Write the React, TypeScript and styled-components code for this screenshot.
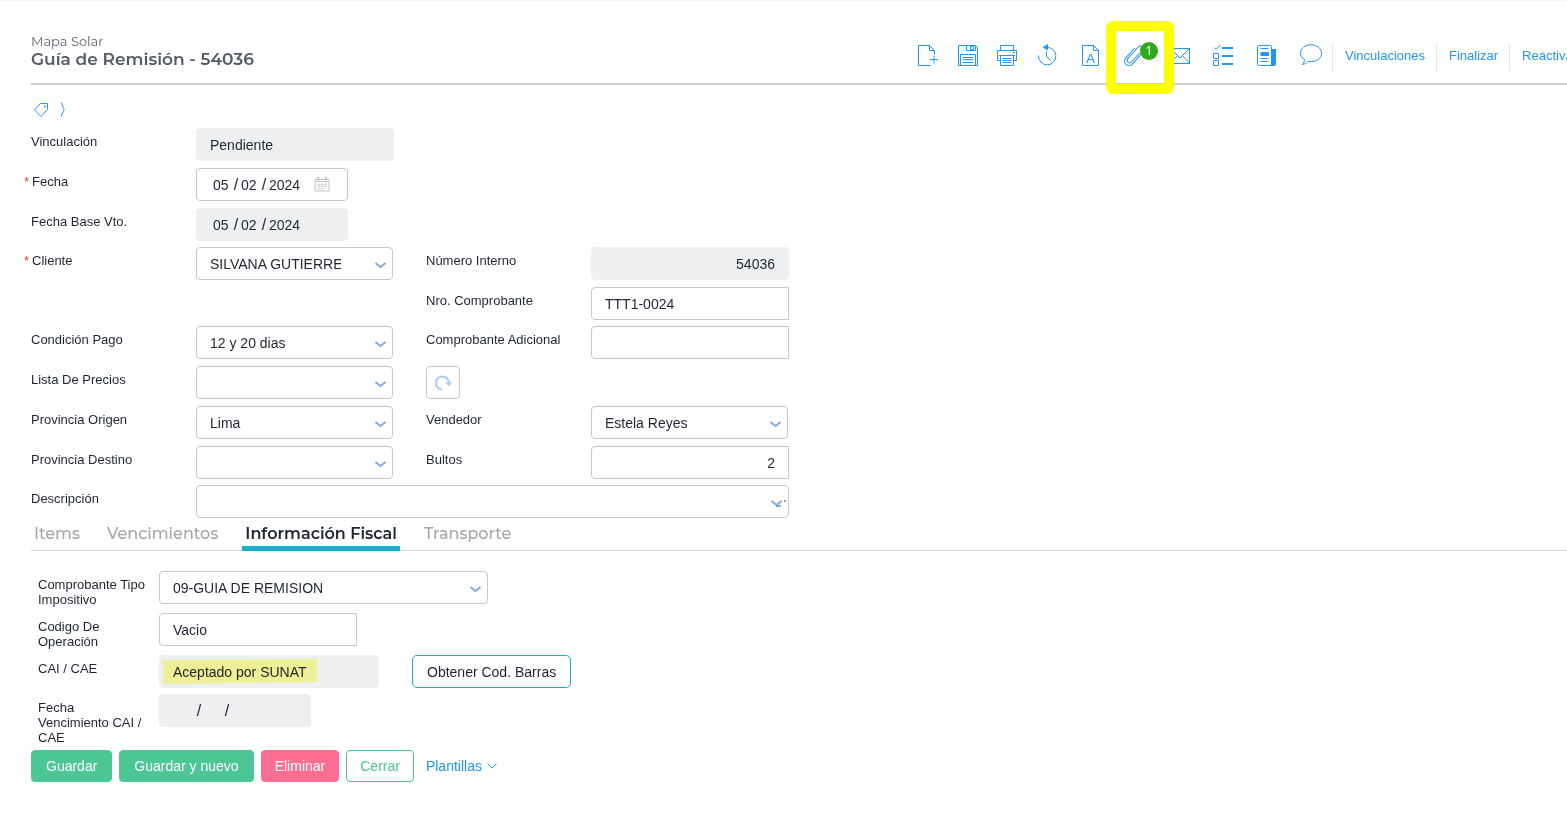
import React from "react";
import styled, { createGlobalStyle, css } from "styled-components";

const GlobalStyle = createGlobalStyle`
  * { box-sizing: border-box; }
  body {
    margin: 0;
    background: #fff;
    color: #1f2533;
    font-family: "Liberation Sans", Arial, sans-serif;
    font-size: 14px;
  }
  button, input, select { font: inherit; color: inherit; }
`;

const blue = "#2196f3";
const heading = `Montserrat, Inter, sans-serif`;

const Page = styled.main`
  padding: 0 0 40px 31px;
  overflow-x: clip;
  border-top: 1px solid #f7f7f7;
`;

const Header = styled.header`
  display: flex;
  align-items: flex-start;
  padding-top: 33px;
  height: 84px;
  border-bottom: 2px solid #cccdd2;
`;

const Titles = styled.div`
  flex: 1;
  min-width: 0;
  font-family: ${heading};
`;

const Company = styled.p`
  margin: 0;
  font-size: 13px;
  line-height: 15px;
  color: #5f646e;
`;

const Title = styled.h1`
  margin: 0;
  font-size: 17px;
  line-height: 20px;
  font-weight: 600;
  color: #555a64;
`;

const Toolbar = styled.nav`
  display: flex;
  flex: 0 0 659px;
  width: 659px;
  margin-top: 10px;
  white-space: nowrap;
`;

const IconButton = styled.button<{ $wide?: boolean }>`
  position: relative;
  display: flex;
  flex: none;
  justify-content: center;
  width: ${(p) => (p.$wide ? 44 : 40)}px;
  height: 27px;
  padding: 0;
  border: 0;
  background: none;
  cursor: pointer;
`;

const ToolIcon = styled.svg`
  width: 24px;
  height: 24px;
  overflow: visible;
  fill: none;
  stroke: ${blue};
  stroke-width: 1;
`;

const ToolLink = styled.a`
  flex: none;
  height: 27px;
  padding: 0 11px 0 12px;
  border-left: 1px solid #e2e3e5;
  font-size: 13px;
  line-height: 23px;
  color: ${blue};
  text-decoration: none;
`;

const Badge = styled.span`
  position: absolute;
  top: -2px;
  left: 28px;
  width: 18px;
  height: 18px;
  border-radius: 50%;
  background: #2fa81c;
  color: #fff;
  font: 12px/18px "Noto Sans", sans-serif;
  text-align: center;
`;

const Highlight = styled.span`
  position: absolute;
  z-index: 1;
  top: -23px;
  left: -6px;
  width: 68px;
  height: 73px;
  border: 10px solid #ffff00;
  border-radius: 7px;
  pointer-events: none;
`;

const Crumbs = styled.div`
  display: flex;
  align-items: center;
  gap: 10px;
  height: 43px;
  padding: 7px 0 0 2px;
`;

const CrumbButton = styled.button`
  display: flex;
  padding: 0;
  border: 0;
  background: none;
`;

const LineIcon = styled.svg`
  fill: none;
  stroke: ${blue};
`;

const Form = styled.form`
  margin: 0;
`;

const FieldGroup = styled.div<{ $last?: boolean }>`
  display: grid;
  grid-template-columns: 165px 198px 32px 165px 198px;
  row-gap: 7px;
  margin-bottom: ${(p) => (p.$last ? 0 : 6)}px;
`;

const Label = styled.label<{ $second?: boolean; $narrow?: boolean }>`
  grid-column: ${(p) => (p.$second ? 4 : 1)};
  padding: 6px ${(p) => (p.$narrow ? 12 : 0)}px 0 0;
  font-size: 13px;
  line-height: 15px;
`;

const Star = styled.span`
  display: inline-block;
  width: 8px;
  margin-left: -7px;
  color: #e8412c;
`;

const Cell = styled.div<{ $second?: boolean; $span?: boolean }>`
  position: relative;
  display: flex;
  grid-column: ${(p) => (p.$second ? "5" : p.$span ? "2 / 6" : "2")};
`;

const box = css`
  height: 33px;
  border: 1px solid #c6c8cb;
  border-radius: 4px;
  background: #fff;
  outline: 0;
`;

const Input = styled.input<{ $width?: number; $right?: boolean }>`
  ${box}
  width: ${(p) => p.$width ?? 198}px;
  padding: 0 13px;
  border-radius: 4px 0 0 4px;
  text-align: ${(p) => (p.$right ? "right" : "left")};

  &:read-only {
    border-color: #eeeff1;
    border-radius: 4px;
    background: #eeeff1;
  }
`;

const SelectBox = styled.div<{ $width?: number }>`
  position: relative;
  width: ${(p) => p.$width ?? 197}px;
`;

const SelectControl = styled.select`
  ${box}
  display: block;
  width: 100%;
  padding: 0 51px 0 13px;
  appearance: none;
`;

const SelectArrow = styled.svg`
  position: absolute;
  top: 14px;
  right: 6px;
  width: 13px;
  height: 9px;
  overflow: visible;
  pointer-events: none;
  fill: none;
  stroke: #7fabdc;
  stroke-width: 2;
`;

const DateBox = styled.div<{ $disabled?: boolean }>`
  ${box}
  display: flex;
  align-items: center;
  width: 152px;
  padding-left: 16px;
  ${(p) => p.$disabled && "background: #eeeff1; border-color: #eeeff1;"}
`;

const DatePart = styled.input<{ $year?: boolean }>`
  width: ${(p) => (p.$year ? 34 : 18)}px;
  height: 20px;
  padding: 0;
  border: 0;
  background: transparent;
  outline: 0;
`;

const Slash = styled.span`
  width: 10px;
  text-align: center;
  font-size: 16px;
`;

const CalendarButton = styled.button`
  display: flex;
  margin-left: 11px;
  padding: 0;
  border: 0;
  background: none;
`;

const Reload = styled.button`
  ${box}
  display: flex;
  grid-column: 4;
  align-items: center;
  justify-content: center;
  width: 34px;
  padding: 0;
`;

const Tabs = styled.div`
  display: flex;
  gap: 21px;
  height: 33px;
  border-bottom: 1px solid #d8d9db;
`;

const Tab = styled.button<{ $active?: boolean }>`
  height: 33px;
  padding: 4px 3px 0;
  border: 0;
  border-bottom: 5px solid ${(p) => (p.$active ? "#1cabd0" : "transparent")};
  background: none;
  color: ${(p) => (p.$active ? "#1f2533" : "#a6a6a6")};
  font-family: ${heading};
  font-size: 16px;
  font-weight: ${(p) => (p.$active ? 600 : 500)};
  line-height: 24px;
`;

const Fiscal = styled.div`
  display: grid;
  grid-template-columns: 121px auto;
  row-gap: 6px;
  padding: 20px 0 5px 7px;
`;

const FiscalCell = styled.div`
  position: relative;
  display: flex;
  gap: 33px;
`;

const Marker = styled.span`
  position: absolute;
  top: 4px;
  left: 4px;
  width: 154px;
  height: 25px;
  background: #ffff9f;
  mix-blend-mode: multiply;
  clip-path: polygon(0 5%, 100% 0, 100% 93%, 0 100%);
  pointer-events: none;
`;

const Button = styled.button<{ $kind: "green" | "pink" | "line" | "outline" }>`
  height: ${(p) => (p.$kind === "outline" ? 33 : 32)}px;
  padding: 0 ${(p) => (p.$kind === "green" || p.$kind === "outline" ? 14 : 13)}px;
  border: 1px solid;
  border-radius: 4px;
  ${(p) =>
    ({
      green: "background: #4dc695; border-color: #4dc695; color: #fff;",
      pink: "background: #ff6e92; border-color: #ff6e92; color: #fff;",
      line: "background: #fff; border-color: #4dc695; color: #4dc695;",
      outline: "background: #fff; border-color: #1cabd0; border-radius: 5px;",
    })[p.$kind]}
`;

const Actions = styled.footer`
  display: flex;
  gap: 7px;
`;

const MenuButton = styled.button`
  display: flex;
  align-items: center;
  gap: 4px;
  height: 32px;
  padding: 0 5px;
  border: 0;
  background: none;
  color: ${blue};
`;

function Select(props: { id: string; value?: string; width?: number; busy?: boolean }) {
  return (
    <SelectBox $width={props.width}>
      <SelectControl id={props.id}>
        <option>{props.value ?? ""}</option>
      </SelectControl>
      <SelectArrow viewBox="0 0 13 9">
        <path d="M1.500 2L6.500 6L11.500 2" />
        {props.busy && <path d="M6 7h5M15 1v2" />}
      </SelectArrow>
    </SelectBox>
  );
}

function DateField(props: { id: string; name: string; value?: string[]; disabled?: boolean; calendar?: boolean }) {
  const [d, m, y] = props.value ?? ["", "", ""];
  return (
    <DateBox $disabled={props.disabled}>
      <DatePart id={props.id} defaultValue={d} readOnly={props.disabled} />
      <Slash>/</Slash>
      <DatePart aria-label={`${props.name}: mes`} defaultValue={m} readOnly={props.disabled} />
      <Slash>/</Slash>
      <DatePart $year aria-label={`${props.name}: año`} defaultValue={y} readOnly={props.disabled} />
      {props.calendar && (
        <CalendarButton type="button" aria-label="Abrir calendario">
          <svg width="16" height="15" viewBox="0 0 16 15" fill="none" stroke="#c4c4c4">
            <path d="M1 2.500h14v11.500H1zM1 4.500h14" />
            <path d="M4 0v3M12 0v3" strokeWidth="2" />
            <path d="M3 7.500h10M3 9.500h10M3 11.500h6M5.500 6v7M8.500 6v7M11.500 5v6" stroke="#d9d9d9" />
          </svg>
        </CalendarButton>
      )}
    </DateBox>
  );
}

export default function App() {
  return (
    <>
      <GlobalStyle />
      <Page>
        <Header>
          <Titles>
            <Company>Mapa Solar</Company>
            <Title>Guía de Remisión - 54036</Title>
          </Titles>
          <Toolbar aria-label="Herramientas">
            <IconButton aria-label="Nuevo">
              <ToolIcon viewBox="0 0 24 24">
                <path d="M14.500 21.500h-12v-20h11l5 5v4M13.500 1.500v5h5M18 11.500v8M14 15.500h8" />
              </ToolIcon>
            </IconButton>
            <IconButton aria-label="Guardar">
              <ToolIcon viewBox="0 0 24 24">
                <path d="M2.500 1.500h17l2 2v18h-19zM10.500 1.500v5h9v-5M14.500 2.500h3v3h-3zM4.500 21.500v-11h15v11" />
                <path d="M6.500 13.500h11M6.500 15.500h11M6.500 18.500h11" />
              </ToolIcon>
            </IconButton>
            <IconButton aria-label="Imprimir">
              <ToolIcon viewBox="0 0 24 24">
                <path d="M4.500 6.500v-5h13v5M4.500 16.500h-3v-10h19v10h-3M4.500 11.500h13v10h-13zM3 11.500h16" />
                <path d="M6.500 14.500h9M6.500 16.500h9M6.500 18.500h9M17 8.500h2" />
              </ToolIcon>
            </IconButton>
            <IconButton aria-label="Historial">
              <ToolIcon viewBox="0 0 24 24">
                <path d="M10 3.500A8.700 8.700 0 1 1 2.500 11.500M10.500 7.500v5l4 4" />
                <path d="M6.500 3.200L12 0v6.500z" fill={blue} stroke="none" />
              </ToolIcon>
            </IconButton>
            <IconButton $wide aria-label="Plantilla de texto">
              <ToolIcon viewBox="0 0 24 24">
                <path d="M4.500 1.500h11l5 5v15h-16zM15.500 1.500v5h5" />
                <text x="12.500" y="19" textAnchor="middle" fontSize="13" fill={blue} stroke="none">
                  A
                </text>
              </ToolIcon>
            </IconButton>
            <IconButton $wide aria-label="Adjuntos">
              <ToolIcon viewBox="0 0 24 24">
                <path
                  transform="rotate(42 12 11.500)"
                  d="M7.500 6v13a4.500 4.500 0 0 0 9 0V3a3.500 3.500 0 0 0-7 0v15a2.500 2.500 0 0 0 5 0V6"
                />
              </ToolIcon>
              <Badge>1</Badge>
              <Highlight />
            </IconButton>
            <IconButton $wide aria-label="Correo">
              <ToolIcon viewBox="0 0 24 24">
                <path d="M4.500 4.500h19v15h-19zM4.500 4.500l9.500 9.500l9.500-9.500M4.500 19.500l7-8M23.500 19.500l-7-8" />
              </ToolIcon>
            </IconButton>
            <IconButton $wide aria-label="Tareas">
              <ToolIcon viewBox="0 0 24 24">
                <path d="M4 3.500l2 2l4.500-4.500M3.500 9.500h5v5h-5zM3.500 16.500h5v5h-5z" />
                <path d="M12 4h11M12 12h11M12 20h11" strokeWidth="2" />
              </ToolIcon>
            </IconButton>
            <IconButton $wide aria-label="Noticias">
              <ToolIcon viewBox="0 0 24 24">
                <path d="M5 1.500h11.500q1 0 1 1v19h-12q-2 0-2-2v-17q0-1 1.500-1zM6.500 4.500h8M6.500 14.500h8M6.500 17.500h8" />
                <path d="M6.500 8h8.500v4h-8.500zM18 5h4v15q0 2-2 2h-2.500z" fill={blue} stroke="none" />
              </ToolIcon>
            </IconButton>
            <IconButton $wide aria-label="Comentarios">
              <ToolIcon viewBox="0 0 24 24">
                <path d="M6.500 15.500C3.800 14 2.500 12 2.500 9.300C2.500 4.300 7.200 .8 13 .8S23.500 4.300 23.500 9.300S18.800 17.600 13 17.600C12 17.600 11 17.500 10 17.300C8.500 19.300 6.500 20.300 4.300 20.500C5.800 19 6.500 17.300 6.500 15.500z" />
              </ToolIcon>
            </IconButton>
            <ToolLink href="#vinculaciones">Vinculaciones</ToolLink>
            <ToolLink href="#finalizar">Finalizar</ToolLink>
            <ToolLink href="#reactivar">Reactivar</ToolLink>
          </Toolbar>
        </Header>

        <Crumbs>
          <CrumbButton aria-label="Etiquetas">
            <LineIcon width="16" height="16" viewBox="0 0 16 16">
              <path d="M7.500 1.500h7v6l-6.500 7l-6.500-6.500z" />
              <circle cx="12" cy="4.500" r=".7" />
            </LineIcon>
          </CrumbButton>
          <CrumbButton aria-label="Expandir">
            <LineIcon width="8" height="18" viewBox="0 0 8 18">
              <path d="M2 1.500q3 6 3 7q0 1-3 7" />
            </LineIcon>
          </CrumbButton>
        </Crumbs>

        <Form onSubmit={(e) => e.preventDefault()}>
          <FieldGroup>
            <Label htmlFor="vinculacion">Vinculación</Label>
            <Cell><Input id="vinculacion" readOnly defaultValue="Pendiente" /></Cell>
            <Label htmlFor="fecha"><Star>*</Star>Fecha</Label>
            <Cell><DateField id="fecha" name="Fecha" value={["05", "02", "2024"]} calendar /></Cell>
            <Label htmlFor="fechaBase">Fecha Base Vto.</Label>
            <Cell><DateField id="fechaBase" name="Fecha base" value={["05", "02", "2024"]} disabled /></Cell>
          </FieldGroup>
          <FieldGroup>
            <Label htmlFor="cliente"><Star>*</Star>Cliente</Label>
            <Cell><Select id="cliente" value="SILVANA GUTIERREZ" /></Cell>
            <Label $second htmlFor="numero">Número Interno</Label>
            <Cell $second><Input id="numero" $right readOnly defaultValue="54036" /></Cell>
            <Label $second htmlFor="comprobante">Nro. Comprobante</Label>
            <Cell $second><Input id="comprobante" defaultValue="TTT1-0024" /></Cell>
          </FieldGroup>
          <FieldGroup>
            <Label htmlFor="condicion">Condición Pago</Label>
            <Cell><Select id="condicion" value="12 y 20 dias" /></Cell>
            <Label $second htmlFor="adicional">Comprobante Adicional</Label>
            <Cell $second><Input id="adicional" /></Cell>
            <Label htmlFor="lista">Lista De Precios</Label>
            <Cell><Select id="lista" /></Cell>
            <Reload type="button" aria-label="Recalcular precios">
              <svg width="18" height="18" viewBox="0 0 18 18" fill="none" stroke="#a9cbfb" strokeWidth="2">
                <path d="M8 15.500A6.500 6.500 0 1 1 15 9" />
                <path d="M11 8.500h7.500l-3.500 3.500z" fill="#a9cbfb" stroke="none" />
              </svg>
            </Reload>
            <Label htmlFor="origen">Provincia Origen</Label>
            <Cell><Select id="origen" value="Lima" /></Cell>
            <Label $second htmlFor="vendedor">Vendedor</Label>
            <Cell $second><Select id="vendedor" value="Estela Reyes" /></Cell>
            <Label htmlFor="destino">Provincia Destino</Label>
            <Cell><Select id="destino" /></Cell>
            <Label $second htmlFor="bultos">Bultos</Label>
            <Cell $second><Input id="bultos" $right defaultValue="2" /></Cell>
          </FieldGroup>
          <FieldGroup $last>
            <Label htmlFor="descripcion">Descripción</Label>
            <Cell $span><Select id="descripcion" width={593} busy /></Cell>
          </FieldGroup>

          <Tabs role="tablist">
            <Tab type="button" role="tab">Items</Tab>
            <Tab type="button" role="tab">Vencimientos</Tab>
            <Tab type="button" role="tab" $active aria-selected>Información Fiscal</Tab>
            <Tab type="button" role="tab">Transporte</Tab>
          </Tabs>

          <Fiscal role="tabpanel">
            <Label $narrow htmlFor="tipo">Comprobante Tipo Impositivo</Label>
            <FiscalCell><Select id="tipo" width={329} value="09-GUIA DE REMISION" /></FiscalCell>
            <Label $narrow htmlFor="codigo">Codigo De Operación</Label>
            <FiscalCell><Input id="codigo" defaultValue="Vacio" /></FiscalCell>
            <Label $narrow htmlFor="cai">CAI / CAE</Label>
            <FiscalCell>
              <Input id="cai" $width={220} readOnly defaultValue="Aceptado por SUNAT" />
              <Marker />
              <Button type="button" $kind="outline">Obtener Cod. Barras</Button>
            </FiscalCell>
            <Label $narrow htmlFor="vencimiento">Fecha Vencimiento CAI / CAE</Label>
            <FiscalCell><DateField id="vencimiento" name="Vencimiento" disabled /></FiscalCell>
          </Fiscal>

          <Actions>
            <Button type="submit" $kind="green">Guardar</Button>
            <Button type="button" $kind="green">Guardar y nuevo</Button>
            <Button type="button" $kind="pink">Eliminar</Button>
            <Button type="button" $kind="line">Cerrar</Button>
            <MenuButton type="button">
              Plantillas
              <LineIcon width="12" height="8" viewBox="0 0 12 8">
                <path d="M1.500 1.500l4.500 4.500l4.500-4.500" />
              </LineIcon>
            </MenuButton>
          </Actions>
        </Form>
      </Page>
    </>
  );
}
